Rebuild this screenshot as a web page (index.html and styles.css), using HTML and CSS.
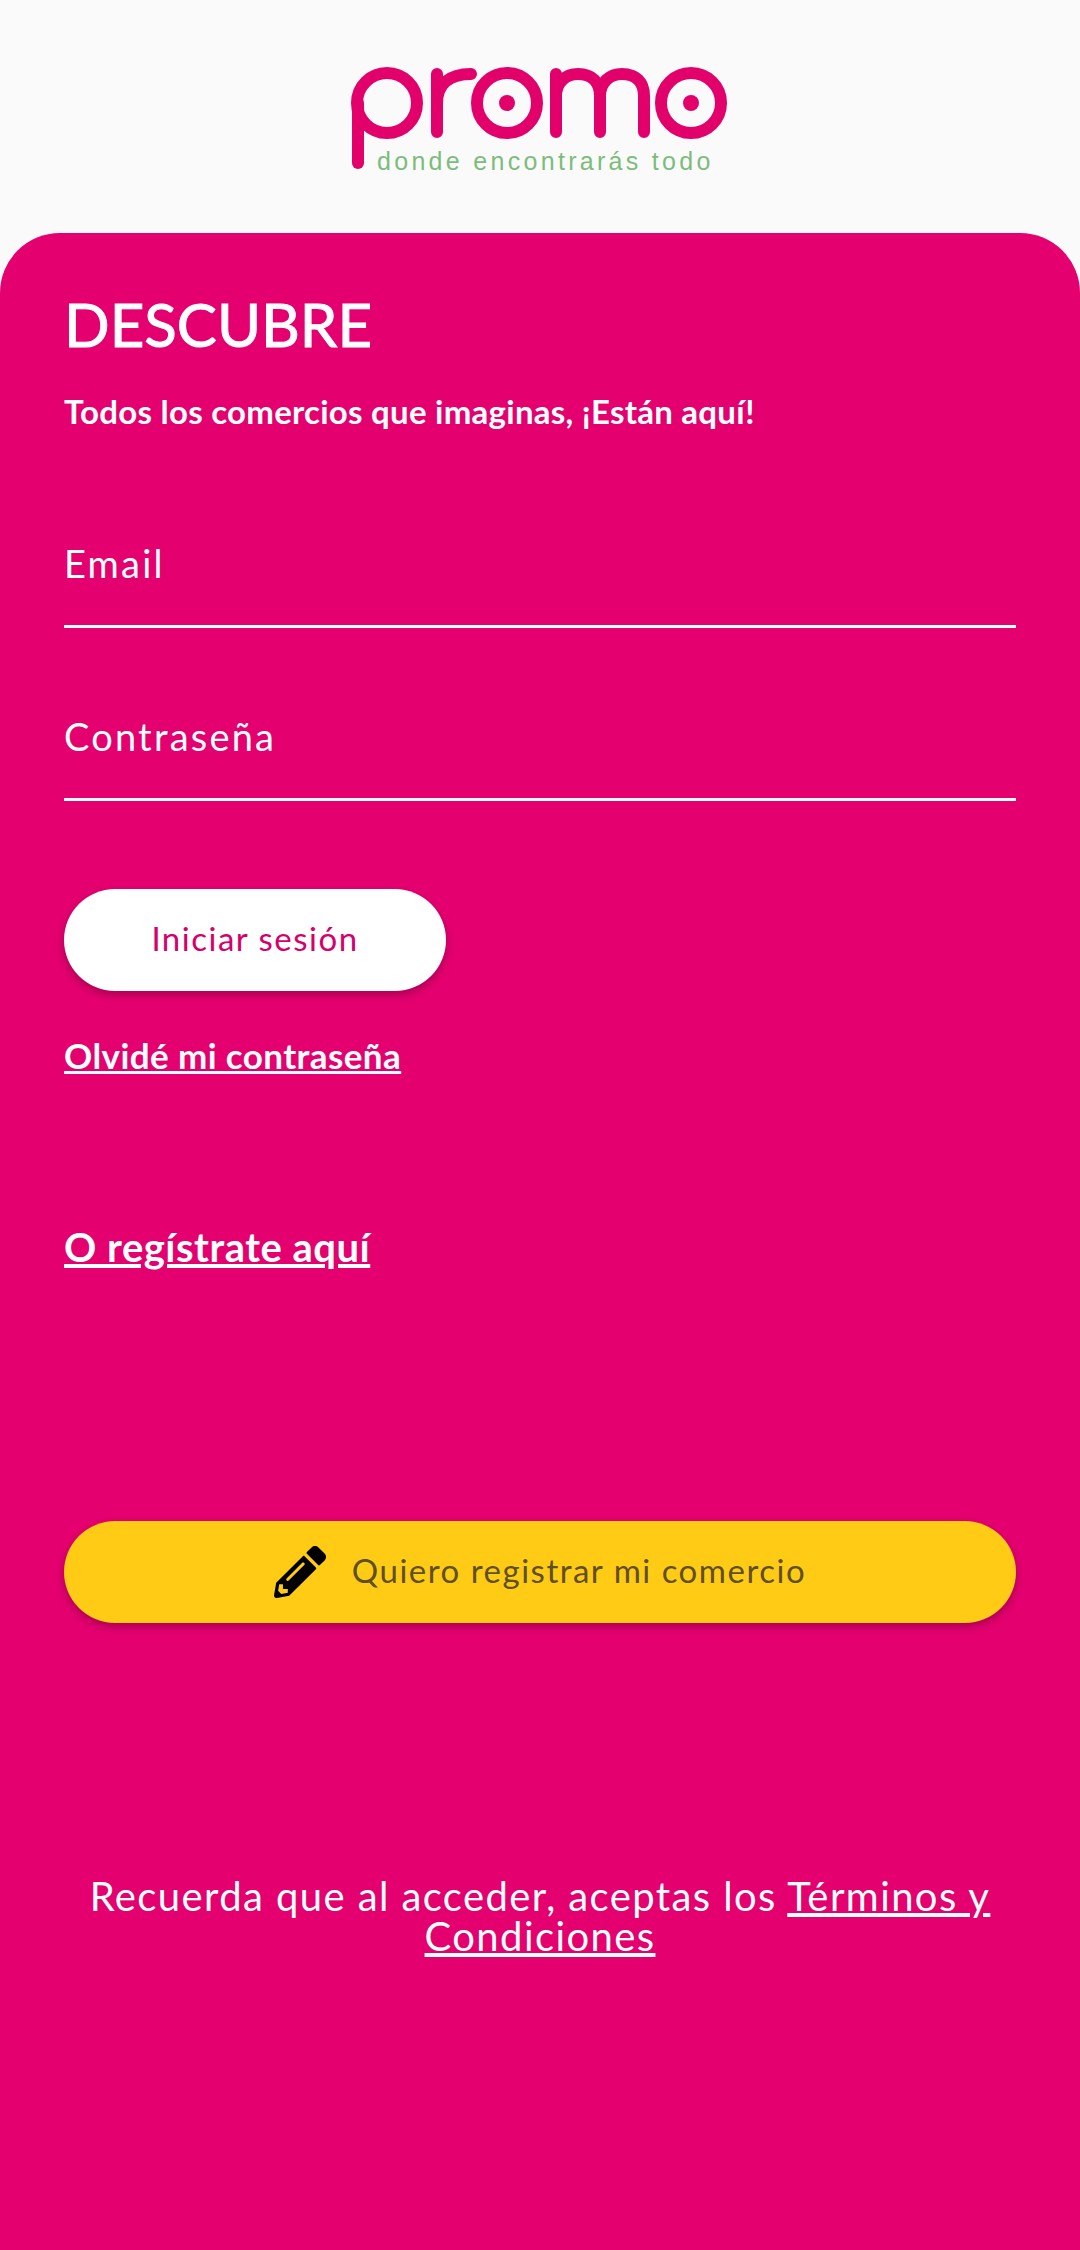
FILE: index.html
```html
<!DOCTYPE html>
<html lang="es">
<head>
<meta charset="utf-8">
<title>Promo</title>
<link rel="stylesheet" href="styles.css">
</head>
<body>
<header class="brand">
  <div class="logo">
    <svg class="logo-mark" viewBox="0 0 400 105" width="400" height="105" aria-hidden="true">
      <g fill="none" stroke="#e2006b" stroke-width="12" stroke-linecap="round">
        <circle cx="41" cy="37" r="30"/>
        <path d="M12 37V97"/>
        <path d="M91 8V66M91 37C91 18 104 8 125 8"/>
        <circle cx="161" cy="37" r="30"/>
        <path d="M210 8V66M210 30C210 16 220 8 232 8C246 8 254 16 254 30V66M254 30C254 16 264 8 276 8C290 8 298 16 298 30V66"/>
        <circle cx="345" cy="37" r="30"/>
      </g>
      <circle cx="161" cy="37" r="8" fill="#e2006b"/>
      <circle cx="345" cy="37" r="8" fill="#e2006b"/>
    </svg>
    <span class="tagline">donde encontrarás todo</span>
  </div>
</header>
<main class="card">
  <h1 class="title">DESCUBRE</h1>
  <p class="lead">Todos los comercios que imaginas, ¡Están aquí!</p>
  <form class="form">
    <input class="field" type="text" placeholder="Email">
    <input class="field" type="password" placeholder="Contraseña">
    <button class="btn btn-login" type="button"><span class="btn-label">Iniciar sesión</span></button>
  </form>
  <a class="link link-forgot" href="#">Olvidé mi contraseña</a>
  <a class="link link-register" href="#">O regístrate aquí</a>
  <button class="btn btn-shop" type="button">
    <svg class="pencil" viewBox="0 0 512 512" width="52" height="52" aria-hidden="true"><path d="M497.9 142.1l-46.1 46.1c-4.7 4.7-12.3 4.7-17 0l-111-111c-4.7-4.7-4.7-12.3 0-17l46.1-46.1c18.7-18.7 49.1-18.7 67.9 0l60.1 60.1c18.8 18.7 18.8 49.1 0 67.9zM284.2 99.8L21.6 362.4.4 483.9c-2.9 16.4 11.4 30.6 27.8 27.8l121.5-21.3 262.6-262.6c4.7-4.7 4.7-12.3 0-17l-111-111c-4.8-4.7-12.4-4.7-17.1 0zM124.1 339.9c-5.5-5.5-5.5-14.3 0-19.8l154-154c5.5-5.5 14.3-5.5 19.8 0s5.5 14.3 0 19.8l-154 154c-5.5 5.5-14.3 5.5-19.8 0zM88 424h48v36.3l-64.5 11.3-31.1-31.1L51.7 376H88v48z"/></svg>
    <span class="btn-label">Quiero registrar mi comercio</span>
  </button>
  <p class="terms">Recuerda que al acceder, aceptas los <a href="#">Términos y Condiciones</a></p>
</main>
</body>
</html>
```
FILE: styles.css
```css
* { box-sizing: border-box; }
html, body { margin: 0; padding: 0; }
body {
  width: 1080px;
  height: 2250px;
  overflow: hidden;
  background: #fafafa;
  font-family: "Lato", "Liberation Sans", sans-serif;
  color: #fff;
  display: flex;
  flex-direction: column;
}
.brand {
  height: 233px;
  display: flex;
  justify-content: center;
  padding-top: 66px;
}
.logo { width: 400px; margin-left: 12px; position: relative; height: 120px; }
.logo-mark { display: block; }
.tagline {
  position: absolute;
  left: 31px;
  top: 81px;
  font-family: "Liberation Sans", sans-serif;
  font-size: 25px;
  line-height: 28px;
  letter-spacing: 3.3px;
  color: #7dbd7c;
  white-space: nowrap;
}
.card {
  flex: 1;
  background: #e4006f;
  border-radius: 60px 60px 0 0;
  padding: 57px 64px 0;
  display: flex;
  flex-direction: column;
  align-items: flex-start;
}
.title {
  margin: 0;
  font-size: 60px;
  line-height: 68px;
  font-weight: 400;
  -webkit-text-stroke: 1px #fff;
}
.lead {
  margin: 33px 0 0;
  font-size: 33px;
  line-height: 40px;
  font-weight: 700;
  letter-spacing: 0.25px;
}
.form {
  width: 100%;
  margin-top: 75px;
  display: flex;
  flex-direction: column;
  align-items: flex-start;
}
.field {
  width: 100%;
  height: 122px;
  padding: 0 0 6px;
  background: none;
  border: 0;
  border-bottom: 3px solid #fff;
  border-radius: 0;
  outline: none;
  font: inherit;
  font-size: 38px;
  letter-spacing: 2.2px;
  color: #fff;
}
.field + .field { margin-top: 51px; }
.field::placeholder { color: #fff; opacity: 1; }
.btn {
  height: 102px;
  border: 0;
  border-radius: 51px;
  font: inherit;
  font-size: 33px;
  letter-spacing: 1.5px;
  box-shadow: 0 4px 8px rgba(0, 0, 0, 0.25);
}
.btn-login {
  width: 382px;
  margin-top: 88px;
  background: #fff;
  color: #d5006b;
}
.link { color: #fff; text-decoration: underline; font-weight: 700; }
.link-forgot { margin-top: 44px; font-size: 35px; line-height: 40px; letter-spacing: 0.4px; }
.link-register { margin-top: 150px; font-size: 40px; line-height: 44px; letter-spacing: 0.5px; }
.btn-shop {
  width: 100%;
  margin-top: 252px;
  background: #ffcb14;
  color: #5f4f21;
  display: flex;
  align-items: center;
  justify-content: center;
  gap: 26px;
}
.btn-label { display: block; padding-bottom: 4px; }
.pencil { flex: none; fill: #000; }
.terms {
  margin: 253px 0 0;
  width: 100%;
  font-size: 40px;
  line-height: 40px;
  text-align: center;
  letter-spacing: 1.4px;
}
.terms a { color: #fff; text-decoration: underline; }
```
